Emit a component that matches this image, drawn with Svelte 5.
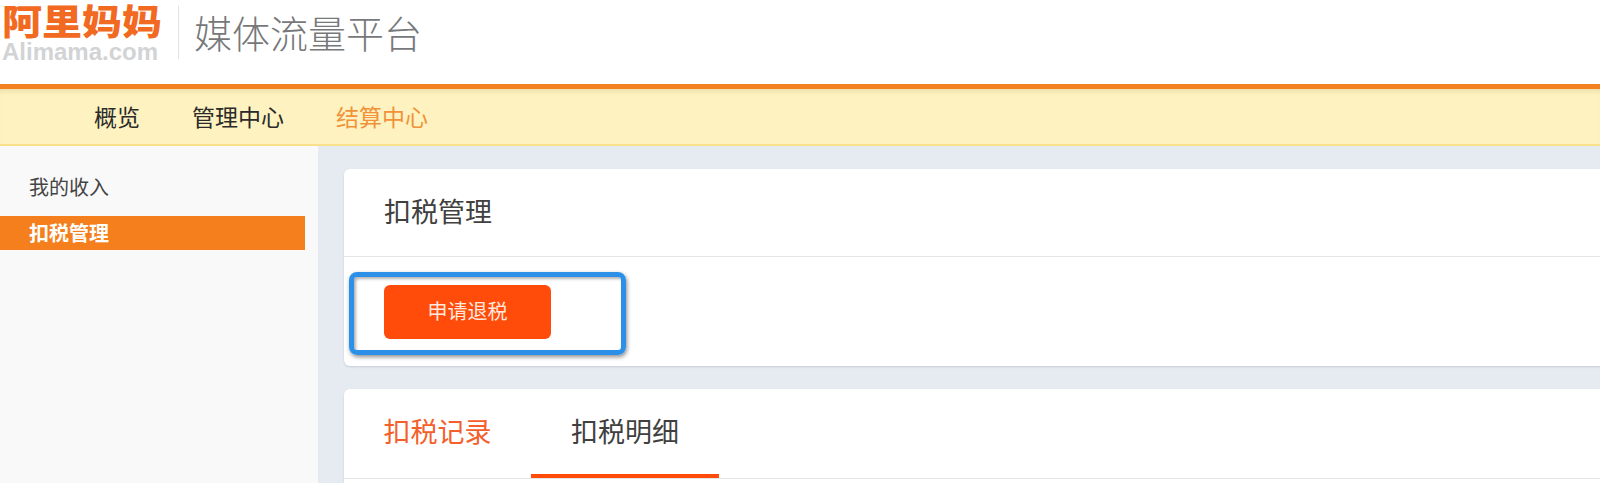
<script>
  const NAV = [
    ['概览', false],
    ['管理中心', false],
    ['结算中心', true],
  ];
  const SIDE = [
    ['我的收入', false],
    ['扣税管理', true],
  ];
  const TABS = [
    ['扣税记录', 'current'],
    ['扣税明细', 'underlined'],
  ];
</script>

<div class="page">
  <header class="top">
    <div class="logo">
      <span class="logo-cn">阿里妈妈</span>
      <span class="logo-en">Alimama.com</span>
    </div>
    <span class="divider"></span>
    <span class="platform">媒体流量平台</span>
  </header>

  <nav class="nav">
    {#each NAV as [label, active]}
      <span class="nav-item" class:active>{label}</span>
    {/each}
  </nav>

  <div class="body">
    <aside class="side">
      {#each SIDE as [label, active]}
        <div class="side-item" class:active>{label}</div>
      {/each}
    </aside>

    <main class="main">
      <section class="card">
        <div class="card-head">扣税管理</div>
        <div class="card-body">
          <button class="apply">申请退税</button>
          <span class="callout"></span>
        </div>
      </section>

      <section class="card tabs-card">
        <div class="tabs">
          {#each TABS as [label, state]}
            <span class="tab {state}">{label}</span>
          {/each}
        </div>
        <div class="tab-rest"></div>
      </section>
    </main>
  </div>
</div>

<style>
  :global(body) {
    margin: 0;
    background: #fff;
    font-family: "Noto Sans CJK SC", "Liberation Sans", sans-serif;
  }

  .page {
    height: 483px;
    overflow: hidden;
    display: flex;
    flex-direction: column;
  }

  .top {
    height: 84px;
    flex-shrink: 0;
    display: flex;
    align-items: flex-start;
    background: #fff;
  }
  .logo {
    width: 178px;
    height: 64px;
    flex-shrink: 0;
    display: flex;
    flex-direction: column;
    padding: 3px 0 0 2px;
    box-sizing: border-box;
  }
  .logo-cn {
    height: 38px;
    font-size: 40px;
    line-height: 38px;
    font-weight: 900;
    color: #f26a21;
    white-space: nowrap;
    transform: scaleY(.88);
    transform-origin: 0 6px;
  }
  .logo-en {
    font-family: "Liberation Sans", sans-serif;
    font-size: 24px;
    line-height: 22px;
    font-weight: 700;
    color: #d2d3d5;
    white-space: nowrap;
  }
  .divider {
    width: 1px;
    height: 53px;
    margin-top: 6px;
    background: #e2e2e2;
    flex-shrink: 0;
  }
  .platform {
    margin: 7px 0 0 15px;
    font-size: 38px;
    line-height: 50px;
    font-weight: 300;
    color: #77787a;
    white-space: nowrap;
  }

  .nav {
    height: 62px;
    flex-shrink: 0;
    box-sizing: border-box;
    display: flex;
    align-items: center;
    gap: 52px;
    padding: 0 0 2px 94px;
    background: #fef2c0;
    border-top: 5px solid #f48120;
    border-bottom: 2px solid #f9e08a;
    box-shadow: inset 0 5px 5px -3px rgba(120, 90, 20, .14);
  }
  .nav-item {
    font-size: 23px;
    color: #2b2b2b;
    white-space: nowrap;
  }
  .nav-item.active { color: #f0923a; }

  .body {
    flex: 1;
    min-height: 0;
    display: flex;
    background: #e6ebf2;
  }

  .side {
    width: 318px;
    flex-shrink: 0;
    background: #f9f9f9;
    padding: 24px 13px 0 0;
    box-sizing: border-box;
  }
  .side-item {
    height: 34px;
    line-height: 34px;
    padding-left: 29px;
    font-size: 20px;
    color: #444;
  }
  .side-item + .side-item { margin-top: 12px; }
  .side-item.active {
    background: #f47f1c;
    color: #fff;
    font-weight: 700;
  }

  .main {
    flex: 1;
    min-width: 0;
    padding: 23px 0 0 26px;
    display: flex;
    flex-direction: column;
    gap: 23px;
  }

  .card {
    background: #fff;
    border-radius: 6px 0 0 6px;
    box-shadow: 0 1px 2px rgba(60, 70, 90, .18);
    flex-shrink: 0;
  }
  .card-head {
    height: 87px;
    line-height: 84px;
    padding-left: 40px;
    font-size: 27px;
    color: #404040;
    border-bottom: 1px solid #e4e6ea;
  }
  .card-body {
    position: relative;
    height: 109px;
    padding: 28px 0 0 40px;
    box-sizing: border-box;
  }

  .apply {
    display: block;
    width: 167px;
    height: 54px;
    padding: 0 0 3px;
    border: none;
    border-radius: 6px;
    background: #ff4c0a;
    color: #ffe9df;
    font-family: inherit;
    font-size: 20px;
  }

  /* annotation frame drawn over the screenshot */
  .callout {
    position: absolute;
    left: 5px;
    top: 15px;
    width: 267px;
    height: 73px;
    border: 5px solid #2c90e8;
    border-radius: 8px;
    box-shadow: 1px 2px 4px rgba(0, 0, 0, .45), inset 2px 2px 3px rgba(0, 0, 0, .3);
  }

  .tabs-card {
    flex: 1;
    border-radius: 6px 0 0 0;
  }
  .tabs {
    display: flex;
    height: 89px;
    border-bottom: 1px solid #e4e6ea;
  }
  .tab {
    width: 188px;
    box-sizing: border-box;
    height: 89px;
    line-height: 84px;
    text-align: center;
    font-size: 27px;
    color: #404040;
    white-space: nowrap;
  }
  .tab.current { width: 187px; color: #f4602a; }
  .tab.underlined { border-bottom: 4px solid #ff4c0a; }
</style>
